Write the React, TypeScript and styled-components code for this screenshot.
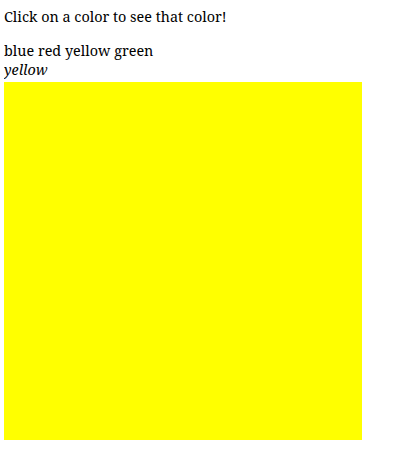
import React, { useState } from "react";
import styled, { createGlobalStyle } from "styled-components";

const Global = createGlobalStyle`
  body {
    margin: 4px;
    font-family: "Noto Serif", "DejaVu Serif", serif;
    font-size: 14.4px;
    color: #000;
    background: #fff;
  }
`;

const Intro = styled.p`
  margin: 3px 0 14px;
  line-height: 20px;
`;

const ColorList = styled.div`
  line-height: 20px;
`;

const ColorOption = styled.span`
  cursor: pointer;
`;

const Selected = styled.div`
  font-style: italic;
  line-height: 18px;
  margin-bottom: 3px;
`;

const Swatch = styled.div<{ $color: string }>`
  width: 358px;
  height: 358px;
  background: ${(p) => p.$color};
`;

const colors = ["blue", "red", "yellow", "green"];

export default function App() {
  const [color, setColor] = useState("yellow");
  return (
    <>
      <Global />
      <Intro>Click on a color to see that color!</Intro>
      <ColorList>
        {colors.map((c, i) => (
          <React.Fragment key={c}>
            {i > 0 && " "}
            <ColorOption onClick={() => setColor(c)}>{c}</ColorOption>
          </React.Fragment>
        ))}
      </ColorList>
      <Selected>{color}</Selected>
      <Swatch $color={color} />
    </>
  );
}
